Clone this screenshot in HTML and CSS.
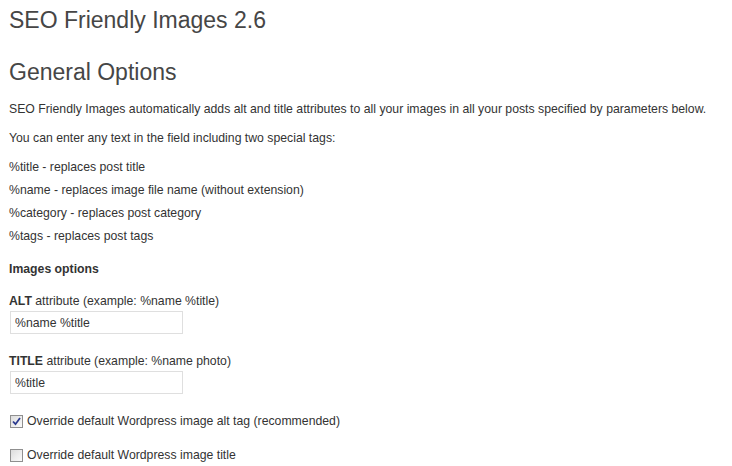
FILE: index.html
```html
<!DOCTYPE html>
<html>
<head>
<meta charset="utf-8">
<link rel="stylesheet" href="styles.css">
</head>
<body>
<div class="wrap">
  <h2 class="title">SEO Friendly Images 2.6</h2>
  <h2 class="section">General Options</h2>
  <p class="intro">SEO Friendly Images automatically adds alt and title attributes to all your images in all your posts specified by parameters below.</p>
  <p class="intro">You can enter any text in the field including two special tags:</p>
  <ul class="tags">
    <li>%title - replaces post title</li>
    <li>%name - replaces image file name (without extension)</li>
    <li>%category - replaces post category</li>
    <li>%tags - replaces post tags</li>
  </ul>
  <h3 class="sub">Images options</h3>
  <div class="field">
    <label><b>ALT</b> attribute (example: %name %title)</label>
    <input class="text" type="text" value="%name %title">
  </div>
  <div class="field">
    <label><b>TITLE</b> attribute (example: %name photo)</label>
    <input class="text" type="text" value="%title">
  </div>
  <label class="check"><span class="box checked"><svg width="9" height="9" viewBox="0 0 9 9"><path d="M1 4.5 L3.5 7.2 L8 1" fill="none" stroke="#2b3a8f" stroke-width="1.8"/></svg></span>Override default Wordpress image alt tag (recommended)</label>
  <label class="check"><span class="box"></span>Override default Wordpress image title</label>
</div>
</body>
</html>
```
FILE: styles.css
```css
html, body { margin: 0; padding: 0; background: #fff; }
body {
  font-family: "Liberation Sans", Arial, sans-serif;
  font-size: 12.25px;
  color: #333;
}
.wrap { padding: 0 9px; }
.title {
  font-weight: normal;
  font-size: 23px;
  line-height: 29px;
  margin: 6px 0 0;
  color: #464646;
}
.section {
  font-weight: normal;
  font-size: 23px;
  line-height: 29px;
  margin: 23px 0 0;
  color: #464646;
}
.intro { margin: 15px 0 0; line-height: 15px; white-space: nowrap; }
.intro + .intro { margin-top: 14px; }
.tags { list-style: none; padding: 0; margin: 14px 0 0; }
.tags li { line-height: 15px; margin-bottom: 8px; }
.sub { font-size: 12.25px; font-weight: bold; margin: 18px 0 0; line-height: 15px; color: #333; }
.field { margin-top: 17px; display: flex; flex-direction: column; align-items: flex-start; }
.field label { line-height: 15px; }
.field + .field { margin-top: 20px; }
.text {
  margin: 2px 0 0 1px;
  width: 173px;
  height: 23px;
  box-sizing: border-box;
  border: 1px solid #dfdfdf;
  padding: 0 4px;
  font-family: "Liberation Sans", Arial, sans-serif;
  font-size: 12.25px;
  color: #333;
  outline: none;
}
.check { display: flex; align-items: center; line-height: 15px; margin-top: 20px; }
.check + .check { margin-top: 19px; }
.box {
  width: 13px; height: 13px; box-sizing: border-box;
  border: 1px solid #8f8f8f;
  background: linear-gradient(135deg, #dcdcdc, #fbfbfb);
  margin: 0 4px 0 1px;
  display: inline-flex; align-items: center; justify-content: center;
}
```
